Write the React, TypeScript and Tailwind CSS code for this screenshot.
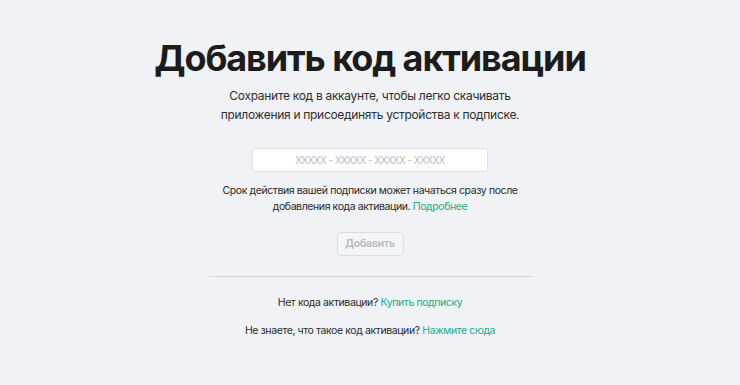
export default function App() {
  return (
    <div
      className="flex min-h-[385px] w-full flex-col items-center bg-[#f1f2f6] pt-[35px] text-[#2b2b2b]"
      style={{ fontFamily: "Inter, 'Noto Sans', sans-serif" }}
    >
      <h1 className="text-[36px] font-bold leading-[46px] tracking-[-1.1px] text-[#1c1c1c]">
        Добавить код активации
      </h1>
      <p className="mt-[5px] text-center text-[12px] leading-[19px] tracking-[-0.3px] text-[#2e2e2e]">
        Сохраните код в аккаунте, чтобы легко скачивать
        <br />
        приложения и присоединять устройства к подписке.
      </p>
      <input
        placeholder="XXXXX - XXXXX - XXXXX - XXXXX"
        className="mt-[24px] h-[24px] w-[236px] rounded-[4px] border border-[#dfe1e6] bg-white text-center text-[10px] tracking-[-0.6px] text-[#333] outline-none placeholder:text-[#b8bbc2]"
      />
      <p className="mt-[11px] text-center text-[10.5px] leading-[16px] tracking-[-0.4px] text-[#2a2a2a]">
        Срок действия вашей подписки может начаться сразу после
        <br />
        добавления кода активации.{" "}
        <a className="text-[#2aa889]">Подробнее</a>
      </p>
      <button className="mt-[17px] h-[24px] w-[67px] rounded-[4px] border border-[#d9dce3] bg-[#f4f5f8] text-[10.5px] font-semibold tracking-[-0.2px] text-[#b4b8c0]">
        Добавить
      </button>
      <div className="mt-[20px] h-px w-[323px] bg-[#d4d6dc]" />
      <p className="mt-[18px] text-[10.5px] leading-[16px] tracking-[-0.4px] text-[#2a2a2a]">
        Нет кода активации? <a className="text-[#2aa889]">Купить подписку</a>
      </p>
      <p className="mt-[12px] text-[10.5px] leading-[16px] tracking-[-0.4px] text-[#2a2a2a]">
        Не знаете, что такое код активации?{" "}
        <a className="text-[#2aa889]">Нажмите сюда</a>
      </p>
    </div>
  );
}
